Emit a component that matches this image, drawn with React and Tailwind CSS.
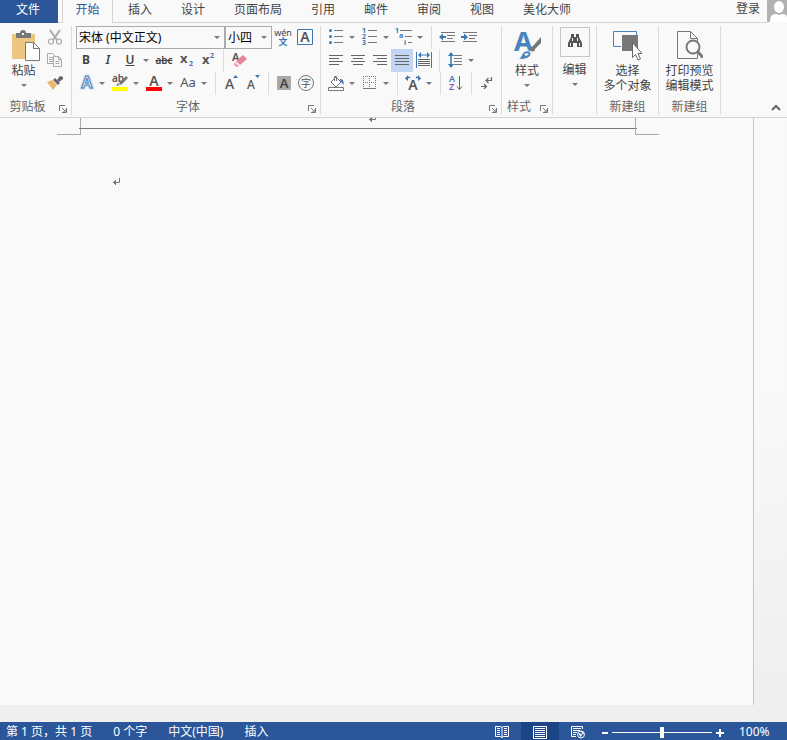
import { useState } from "react";

const TABS = ["插入", "设计", "页面布局", "引用", "邮件", "审阅", "视图", "美化大师"];

const Arrow = () => (
  <svg width="6" height="3" viewBox="0 0 6 3" fill="#777">
    <path d="M0 0h6L3 3z" />
  </svg>
);

function Btn({ label, active, children }) {
  return (
    <button
      aria-label={label}
      className={`flex h-[23px] w-[22px] shrink-0 items-center justify-center pb-px ${
        active ? "bg-[#c2d5f2]" : "hover:bg-[#d5e1f2]"
      }`}
    >
      {children}
    </button>
  );
}

function Split({ label, children }) {
  return (
    <div className="mr-0.5 flex items-center">
      <Btn label={label}>{children}</Btn>
      <button
        aria-label={`${label}选项`}
        className="flex h-[23px] w-[10px] items-center justify-center"
      >
        <Arrow />
      </button>
    </div>
  );
}

const Sep = () => <div className="mx-1 h-[23px] w-px bg-[#dcdcdc]" />;

function Group({ title, launcher, children }) {
  return (
    <section className="flex flex-col border-r border-[#dcdcdc]">
      <div className="h-[69px]">{children}</div>
      <div className="mt-1 flex items-end">
        <h2 className="min-h-4 flex-1 text-center leading-4 text-[#666]">{title}</h2>
        {launcher && (
          <button aria-label={`${title}设置`} className="flex h-4 w-4 items-end justify-center pb-0.5">
            <svg width="8" height="8" viewBox="0 0 8 8" fill="none" stroke="#777">
              <path d="M.5 6V.5H6M3 3l3 3M7.5 3v4.5H3M7 4v3H4" />
            </svg>
          </button>
        )}
      </div>
    </section>
  );
}

function BigButton({ icon, lines, menu }) {
  return (
    <button className="flex flex-col items-center pt-1 leading-[15px] text-[#444]">
      <span className="mb-px flex h-8 items-start justify-center">{icon}</span>
      {lines.map((line) => (
        <span key={line}>{line}</span>
      ))}
      {menu && (
        <span className="flex h-[15px] items-center">
          <Arrow />
        </span>
      )}
    </button>
  );
}

function Combo({ label, options, className }) {
  return (
    <div className={`relative h-[23px] border border-[#ababab] ${className}`}>
      <select
        aria-label={label}
        className="h-full w-full appearance-none bg-transparent pl-0.5 text-black outline-none"
      >
        {options.map((o) => (
          <option key={o}>{o}</option>
        ))}
      </select>
      <span className="pointer-events-none absolute inset-y-0 right-1 flex items-center">
        <Arrow />
      </span>
    </div>
  );
}

// horizontal strokes for the alignment buttons, given as [x1, x2]
function Lines({ rows }) {
  return (
    <svg width="14" height="12" viewBox="0 0 14 12" stroke="#666">
      {rows.map(([a, b], i) => (
        <path key={i} d={`M${a} ${i * 3 + 1.5}H${b}`} />
      ))}
    </svg>
  );
}

const ParagraphMark = () => (
  <svg width="8" height="8" viewBox="0 0 8 8" fill="none" stroke="#777">
    <path d="M6.500 0v4.500H0M2.500 2v5M1.500 3v3" />
  </svg>
);

function Clipboard() {
  return (
    <Group title="剪贴板" launcher>
      <div className="flex w-[71px] pl-[3px]">
        <div className="flex w-[41px] justify-center">
          <BigButton
            lines={["粘贴"]}
            menu
            icon={
              <svg width="30" height="32" viewBox="0 0 30 32" className="ml-1">
                <path d="M1 4h23v25H1z" fill="#ecc77f" />
                <path d="M5 8V3h4a3 3 0 0 1 6 0h5v5z" fill="#777" />
                <path d="M11 3h2v2h-2z" fill="#f9f9f9" />
                <path d="M14.500 12.500h8l6 6v12h-14z" fill="#fff" stroke="#777" />
                <path d="M22.500 12.500v6h6" fill="none" stroke="#777" />
              </svg>
            }
          />
        </div>
        <div>
          <Btn label="剪切">
            <svg width="16" height="16" viewBox="0 0 16 16" fill="none" stroke="#aaa">
              <path d="M3 1l7 10M13 1L6 11" strokeWidth="2" />
              <circle cx="4" cy="12.500" r="2.500" strokeWidth="1.200" />
              <circle cx="12" cy="12.500" r="2.500" strokeWidth="1.200" />
            </svg>
          </Btn>
          <Btn label="复制">
            <svg width="16" height="14" viewBox="0 0 16 14" fill="#f9f9f9" stroke="#aaa">
              <path d="M.5.5h5l3 3v7h-8zM2 4.500h4M2 6.500h4M2 8.500h4" />
              <path d="M6.500 3.500h5l3 3v7h-8zM11.500 3.500v3h3M8.500 8.500h4M8.500 10.500h4" />
            </svg>
          </Btn>
          <Btn label="格式刷">
            <svg width="16" height="14" viewBox="0 0 16 14">
              <path d="M0 6l5-2 5 5-4 5z" fill="#ecb970" />
              <path d="M6 4l2-2 5 5-2 2z" fill="#666" />
              <path d="M10 4l3-4 3 1v2l-4 3z" fill="#666" />
            </svg>
          </Btn>
        </div>
      </div>
    </Group>
  );
}

function FontGroup() {
  return (
    <Group title="字体" launcher>
      <div className="w-[248px] pl-[3px]">
        <div className="flex h-[23px] items-center pl-px">
          <Combo label="字体" options={["宋体 (中文正文)", "黑体", "楷体"]} className="w-[149px]" />
          <Combo label="字号" options={["小四", "四号", "五号"]} className="w-[47px]" />
          <Btn label="拼音指南">
            <svg width="18" height="18" viewBox="0 0 18 18" className="overflow-visible">
              <text x="9" y="8" textAnchor="middle" fontSize="9" fill="#444">wén</text>
              <text x="9" y="17" textAnchor="middle" fontSize="9" fontWeight="700" fill="#3c76b5">文</text>
            </svg>
          </Btn>
          <Btn label="字符边框">
            <svg width="16" height="16" viewBox="0 0 16 16" className="overflow-visible">
              <path d="M.5.5h15v15H.5z" fill="none" stroke="#3c76b5" />
              <text x="8" y="13" textAnchor="middle" fontSize="14" fontWeight="600" fill="#555">A</text>
            </svg>
          </Btn>
        </div>
        <div className="flex h-[23px] items-center text-[#444]">
          <Btn label="加粗"><b>B</b></Btn>
          <Btn label="倾斜"><i className="font-semibold">I</i></Btn>
          <Split label="下划线"><span className="font-semibold underline">U</span></Split>
          <Btn label="删除线"><s className="text-[10px] font-semibold">abc</s></Btn>
          <Btn label="下标">
            <svg width="16" height="14" viewBox="0 0 16 14" className="overflow-visible">
              <text x="2" y="10" fontSize="13" fontWeight="700" fill="#555">x</text>
              <text x="11" y="13" fontSize="7" fontWeight="700" fill="#3c76b5">2</text>
            </svg>
          </Btn>
          <Btn label="上标">
            <svg width="16" height="14" viewBox="0 0 16 14" className="overflow-visible">
              <text x="2" y="11" fontSize="13" fontWeight="700" fill="#555">x</text>
              <text x="10" y="5" fontSize="7" fontWeight="700" fill="#3c76b5">2</text>
            </svg>
          </Btn>
          <Sep />
          <Btn label="清除格式">
            <svg width="18" height="16" viewBox="0 0 18 16" className="overflow-visible">
              <text x="2" y="9" fontSize="11" fontWeight="600" fill="#555">A</text>
              <path d="M6 9l7-6 4 4-7 6z" fill="#e8849a" />
              <path d="M5 10l4 4-1 1H6l-2-2z" fill="#eda0b0" />
            </svg>
          </Btn>
        </div>
        <div className="flex h-[23px] items-center text-[#555]">
          <Split label="文本效果">
            <svg width="16" height="16" viewBox="0 0 16 16" className="overflow-visible">
              <text x="9" y="13" textAnchor="middle" fontSize="16" fontWeight="600" fill="#fff" stroke="#c4daf0" strokeWidth="3">A</text>
              <text x="9" y="13" textAnchor="middle" fontSize="16" fontWeight="600" fill="#fff" stroke="#4a80b8">A</text>
            </svg>
          </Split>
          <Split label="突出显示">
            <svg width="16" height="16" viewBox="0 1 16 16" className="overflow-visible">
              <text x="0" y="8" fontSize="10" fontWeight="600" fill="#555">ab</text>
              <path d="M14 2l2 2-7 7-2-2zM6 9l2 2-4 1z" fill="#777" />
              <path d="M0 13h16v4H0z" fill="#ff0" />
            </svg>
          </Split>
          <Split label="字体颜色">
            <svg width="16" height="16" viewBox="0 1 16 16" className="overflow-visible">
              <text x="8" y="12" textAnchor="middle" fontSize="14" fontWeight="600" fill="#555">A</text>
              <path d="M0 13h16v4H0z" fill="#f00" />
            </svg>
          </Split>
          <Split label="更改大小写"><span className="text-[13px]">Aa</span></Split>
          <Sep />
          <Btn label="增大字号">
            <svg width="14" height="16" viewBox="0 0 14 16" className="overflow-visible">
              <text x="1" y="14" fontSize="14" fontWeight="500" fill="#555">A</text>
              <path d="M9 3h5l-2.500-3z" fill="#3c76b5" />
            </svg>
          </Btn>
          <Btn label="减小字号">
            <svg width="14" height="16" viewBox="0 0 14 16" className="overflow-visible">
              <text x="1" y="14" fontSize="12" fontWeight="500" fill="#555">A</text>
              <path d="M9 0h5l-2.500 3z" fill="#3c76b5" />
            </svg>
          </Btn>
          <Sep />
          <Btn label="字符底纹">
            <span className="h-[14px] w-[14px] bg-[#a9a9a9] text-[13px] leading-[14px] font-semibold text-[#444]">A</span>
          </Btn>
          <Btn label="带圈字符">
            <span className="flex h-4 w-4 items-center justify-center rounded-full border border-[#777] text-[10px] leading-none">字</span>
          </Btn>
        </div>
      </div>
    </Group>
  );
}

function ParagraphGroup() {
  return (
    <Group title="段落" launcher>
      <div className="w-[180px] pl-1">
        <div className="flex h-[23px] items-center">
          <Split label="项目符号">
            <svg width="14" height="16" viewBox="0 0 14 16">
              <g fill="#3c76b5">
                <circle cx="1.500" cy="1.500" r="1.500" />
                <circle cx="1.500" cy="7.500" r="1.500" />
                <circle cx="1.500" cy="13.500" r="1.500" />
              </g>
              <path d="M5 1.500h9M5 7.500h9M5 13.500h9" stroke="#777" />
            </svg>
          </Split>
          <Split label="编号">
            <svg width="16" height="18" viewBox="0 1 16 18" className="overflow-visible">
              <g fontSize="7" fontWeight="700" fill="#3c76b5">
                <text x="0" y="6">1</text>
                <text x="0" y="12">2</text>
                <text x="0" y="18">3</text>
              </g>
              <path d="M6 3.500h9M6 9.500h9M6 15.500h9" stroke="#777" />
            </svg>
          </Split>
          <Split label="多级列表">
            <svg width="18" height="18" viewBox="0 1 18 18" className="overflow-visible">
              <g fontSize="7" fontWeight="700" fill="#3c76b5">
                <text x="0" y="6">1</text>
                <text x="4" y="11">a</text>
                <text x="9" y="18">i</text>
              </g>
              <path d="M5 3.500h12M10 9.500h7M13 15.500h4" stroke="#777" />
            </svg>
          </Split>
          <Sep />
          <Btn label="减少缩进量">
            <svg width="16" height="12" viewBox="0 0 16 12">
              <path d="M2 1.500h14M8 4.500h8M8 7.500h6M2 10.500h14" stroke="#777" />
              <path d="M0 6l4-3.500v2.500h3v2H4v2.500z" fill="#3c76b5" />
            </svg>
          </Btn>
          <Btn label="增加缩进量">
            <svg width="16" height="12" viewBox="0 0 16 12">
              <path d="M2 1.500h14M8 4.500h8M8 7.500h6M2 10.500h14" stroke="#777" />
              <path d="M7 6L3 2.500v2.500H0v2h3v2.500z" fill="#3c76b5" />
            </svg>
          </Btn>
        </div>
        <div className="flex h-[23px] items-center">
          <Btn label="左对齐"><Lines rows={[[0, 14], [0, 10], [0, 14], [0, 10]]} /></Btn>
          <Btn label="居中"><Lines rows={[[0, 14], [2, 12], [0, 14], [2, 12]]} /></Btn>
          <Btn label="右对齐"><Lines rows={[[0, 14], [4, 14], [0, 14], [4, 14]]} /></Btn>
          <Btn label="两端对齐" active><Lines rows={[[0, 14], [0, 14], [0, 14], [0, 14]]} /></Btn>
          <Btn label="分散对齐">
            <svg width="16" height="16" viewBox="0 0 16 16">
              <path d="M.5 0v16M15.500 0v16M4 3h8" stroke="#3c76b5" />
              <path d="M2 3L5 0v6zM14 3L11 0v6z" fill="#3c76b5" />
              <path d="M2 7.500h12M2 9.500h12M2 11.500h12M2 13.500h12" stroke="#666" />
            </svg>
          </Btn>
          <Sep />
          <Split label="行距">
            <svg width="14" height="16" viewBox="0 0 14 16">
              <path d="M3 2v12" stroke="#3c76b5" strokeWidth="1.500" />
              <path d="M0 4l3-4 3 4zM0 12l3 4 3-4z" fill="#3c76b5" />
              <path d="M6 3.500h8M6 6.500h8M6 9.500h8M6 12.500h8" stroke="#777" />
            </svg>
          </Split>
        </div>
        <div className="flex h-[23px] items-center">
          <Split label="底纹">
            <svg width="16" height="16" viewBox="0 0 16 16" fill="none" stroke="#777">
              <path d="M3 7l5-5 5 5-5 5z" fill="#fff" />
              <path d="M6.500 6V1.500h2V6" />
              <path d="M12 4c3 0 4 2 3.500 6-1-1-1.500-3-3-3z" fill="#3c76b5" stroke="none" />
              <path d="M.5 12.500h15v3H.5z" fill="#fff" />
            </svg>
          </Split>
          <Split label="边框">
            <svg width="14" height="14" viewBox="0 0 14 14" fill="none" stroke="#777" strokeDasharray="1 1">
              <path d="M0 .5h13M0 6.500h13M.5 0v13M6.500 0v13M12.500 0v13" />
              <path d="M0 12.500h13" strokeDasharray="none" />
            </svg>
          </Split>
          <Sep />
          <Split label="中文版式">
            <svg width="16" height="16" viewBox="0 0 16 16" className="overflow-visible">
              <text x="8" y="15" textAnchor="middle" fontSize="14" fontWeight="600" fill="#555">A</text>
              <path d="M1 4C2 2 4 2 5 3M15 4c-1-2-3-2-4-1" fill="none" stroke="#3c76b5" strokeWidth="1.500" />
              <path d="M0 3.500L3 0v6zM16 3.500L13 0v6z" fill="#3c76b5" />
            </svg>
          </Split>
          <Sep />
          <Btn label="排序">
            <svg width="16" height="16" viewBox="0 0 16 16" className="overflow-visible">
              <text x="1" y="7" fontSize="9" fontWeight="600" fill="#3c76b5">A</text>
              <text x="1" y="15" fontSize="9" fontWeight="600" fill="#8a50b5">Z</text>
              <path d="M11.500 1v13M9 11.500l2.500 3 2.500-3" fill="none" stroke="#666" />
            </svg>
          </Btn>
          <Sep />
          <Btn label="显示编辑标记">
            <svg width="12" height="12" viewBox="0 0 12 12" fill="none" stroke="#666" strokeWidth="1.200">
              <path d="M10.500 0v3.500H5M7.500 1L5 3.500 7.500 6M0 9.500h5M3 7l2.500 2.500L3 12" />
            </svg>
          </Btn>
        </div>
      </div>
    </Group>
  );
}

function Ribbon() {
  return (
    <div className="flex border-b border-[#d4d4d4] bg-[#f9f9f9] pt-[3px] pb-0.5">
      <Clipboard />
      <FontGroup />
      <ParagraphGroup />
      <Group title="样式" launcher>
        <div className="flex w-[50px] justify-center">
          <BigButton
            lines={["样式"]}
            menu
            icon={
              <svg width="28" height="31" viewBox="0 0 28 31" className="overflow-visible">
                <text x="1" y="21" fontSize="27" fontWeight="700" fill="#4a84bd">A</text>
                <path d="M28 7v6l-7 7-2-3z" fill="#777" />
                <circle cx="19.500" cy="19" r="2.500" fill="#777" />
                <path d="M5 29c4-1 3-7 8-8 3-1 5 1 5 3-1 5-8 6-13 5z" fill="#4a84bd" stroke="#f9f9f9" />
                <path d="M11 24c2-1 4-1 5 0l-3 2z" fill="#fff" />
              </svg>
            }
          />
        </div>
      </Group>
      <Group title="">
        <div className="flex w-[43px] justify-center">
          <button className="flex flex-col items-center pt-px leading-[15px] text-[#444]">
            <span className="mb-[5px] flex h-[30px] w-[30px] items-center justify-center border border-[#c6c6c6] pb-0.5">
              <svg width="16" height="14" viewBox="0 0 16 14" fill="#555">
                <path d="M4 0h3v3h2V0h3v3l3 6v4h-5V9H6v4H1V9l3-6z" />
                <path d="M3 9h1v3H3zM12 9h1v3h-1zM5 4h1v3H5zM10 4h1v3h-1z" fill="#f9f9f9" />
              </svg>
            </span>
            <span>编辑</span>
            <span className="flex h-[15px] items-center">
              <Arrow />
            </span>
          </button>
        </div>
      </Group>
      <Group title="新建组">
        <div className="flex w-[61px] justify-center">
          <BigButton
            lines={["选择", "多个对象"]}
            icon={
              <svg width="30" height="31" viewBox="0 0 30 31">
                <path d="M9 16.500H1.500V1.500h23V5" fill="none" stroke="#4a84bd" />
                <path d="M10 5h16v16H10z" fill="#777" />
                <path d="M20.500 12.500v15l3-3 2.500 5.500 2.500-1-2.500-5.500h4z" fill="#fff" stroke="#666" />
              </svg>
            }
          />
        </div>
      </Group>
      <Group title="新建组">
        <div className="flex w-[61px] justify-center">
          <BigButton
            lines={["打印预览", "编辑模式"]}
            icon={
              <svg width="28" height="31" viewBox="0 0 28 31" fill="none" stroke="#777">
                <path d="M22.500 24v4.500H2.500V1.500h13l7 7V11M15.500 1.500v7h7" />
                <circle cx="18" cy="17" r="6.500" fill="#f9f9f9" strokeWidth="2" />
                <path d="M22.500 21.500l5.500 6" strokeWidth="3" />
              </svg>
            }
          />
        </div>
      </Group>
      <button aria-label="折叠功能区" className="mr-1.5 ml-auto self-end pb-1">
        <svg width="10" height="7" viewBox="0 0 10 7" fill="none" stroke="#666" strokeWidth="2">
          <path d="M1 6l4-4 4 4" />
        </svg>
      </button>
    </div>
  );
}

function TabBar() {
  return (
    <nav className="flex h-[23px] bg-[#f9f9f9] leading-5 text-[#444]">
      <button className="flex w-[58px] shrink-0 justify-center bg-[#2b579a] pr-0.5 text-white">文件</button>
      <div className="w-1 border-b border-[#d4d4d4]" />
      <button className="flex w-[51px] shrink-0 justify-center border-x border-[#d4d4d4] text-[#2b579a]">
        开始
      </button>
      <div className="flex flex-1 gap-[29px] border-b border-[#d4d4d4] pl-[15px]">
        {TABS.map((tab) => (
          <button key={tab} className="flex shrink-0">
            {tab}
          </button>
        ))}
        <a href="#login" className="mr-[7px] ml-auto leading-[18px]">登录</a>
      </div>
      <svg width="20" height="22" viewBox="0 0 20 22" className="bg-[#b1b1b1]">
        <ellipse cx="12" cy="7" rx="5" ry="6" fill="#fff" />
        <path d="M3 22c0-6 2-8 6-8l3 1 3-1c3 0 5 1 5 3v5z" fill="#fff" />
      </svg>
    </nav>
  );
}

function Page() {
  return (
    <main className="flex flex-1 bg-linear-to-b from-[#f9f9f9] from-45% to-[#efefef] to-95%">
      <div className="flex-1 bg-[#efefef] pb-[17px]">
        <div className="h-full border-r border-[#c6c6c6] bg-[#f9f9f9]">
          <div className="mr-[94px] ml-[57px] flex">
            <div className="h-[17px] w-6 border-r border-b border-[#aaa]" />
            <div className="-mx-0.5 flex h-[11px] flex-1 justify-center overflow-hidden border-b border-[#777] pl-[30px]">
              <svg width="8" height="5" viewBox="0 3 8 5" fill="none" stroke="#777">
                <path d="M6.500 0v4.500H0M2.500 2v5M1.500 3v3" />
              </svg>
            </div>
            <div className="h-[17px] w-6 border-b border-l border-[#aaa]" />
          </div>
          <div className="pt-[43px] pl-[113px]">
            <ParagraphMark />
          </div>
        </div>
      </div>
      <div className="w-[33px]" />
    </main>
  );
}

function StatusBar() {
  const [zoom, setZoom] = useState(100);

  return (
    <footer className="flex h-[18px] items-center bg-[#2b579a] leading-5 text-white">
      <div className="flex flex-1 gap-[21px] pt-px pl-1.5 whitespace-nowrap">
        <span>第 1 页，共 1 页</span>
        <span>0 个字</span>
        <span>中文(中国)</span>
        <span>插入</span>
      </div>
      <button aria-label="阅读视图" className="flex h-[18px] w-[38px] items-center justify-center pt-0.5">
        <svg width="14" height="14" viewBox="0 0 14 14" fill="none" stroke="#fff">
          <path d="M.5 1.500h5l1.500 1 1.500-1h5v10h-5L7 12.500l-1.500-1h-5zM7 2v11M2 3.500h3M2 5.500h3M2 7.500h3M2 9.500h3M9 3.500h3M9 5.500h3M9 7.500h3M9 9.500h3" />
        </svg>
      </button>
      <button aria-label="页面视图" className="flex h-[18px] w-[38px] items-center justify-center bg-[#1b4586] pt-0.5">
        <svg width="14" height="14" viewBox="0 0 14 14" fill="none" stroke="#fff">
          <path d="M.5 1.500h13v12H.5zM2 3.500h10M2 5.500h10M2 7.500h10M2 9.500h10M2 11.500h10" />
        </svg>
      </button>
      <button aria-label="Web 版式视图" className="flex h-[18px] w-[38px] items-center justify-center pt-0.5">
        <svg width="14" height="14" viewBox="0 0 14 14" fill="none" stroke="#fff">
          <path d="M5 11.500H.5V1.500h11V4M2 3.500h8M2 5.500h7M2 7.500h4M2 9.500h3" />
          <circle cx="10" cy="9.500" r="3.500" fill="#2b579a" />
          <path d="M7 8l4 1-1 3.500zM10 6l3 2-1 2z" fill="#fff" stroke="none" />
        </svg>
      </button>
      <button aria-label="缩小" className="ml-1 flex h-[18px] w-2 items-center justify-center pt-1">
        <span className="h-0.5 w-1.5 bg-white" />
      </button>
      <input
        type="range"
        aria-label="显示比例"
        min="0"
        max="200"
        value={zoom}
        onChange={(e) => setZoom(Number(e.target.value))}
        className="mx-[3px] mt-[3px] h-[11px] w-[100px] appearance-none bg-transparent [&::-webkit-slider-runnable-track]:h-px [&::-webkit-slider-runnable-track]:bg-white [&::-webkit-slider-thumb]:-mt-[5px] [&::-webkit-slider-thumb]:h-[11px] [&::-webkit-slider-thumb]:w-1 [&::-webkit-slider-thumb]:appearance-none [&::-webkit-slider-thumb]:bg-white"
      />
      <button aria-label="放大" className="flex h-[18px] w-[10px] items-center justify-center pt-1">
        <svg width="8" height="8" viewBox="0 0 8 8" fill="#fff">
          <path d="M3 0h2v3h3v2H5v3H3V5H0V3h3z" />
        </svg>
      </button>
      <span className="w-[62px] pt-px pl-[14px]">{zoom}%</span>
    </footer>
  );
}

export default function App() {
  return (
    <div className="flex min-h-screen flex-col bg-[#efefef] font-['Noto_Sans','Noto_Sans_CJK_SC',sans-serif] text-[12px]">
      <TabBar />
      <Ribbon />
      <Page />
      <StatusBar />
    </div>
  );
}
